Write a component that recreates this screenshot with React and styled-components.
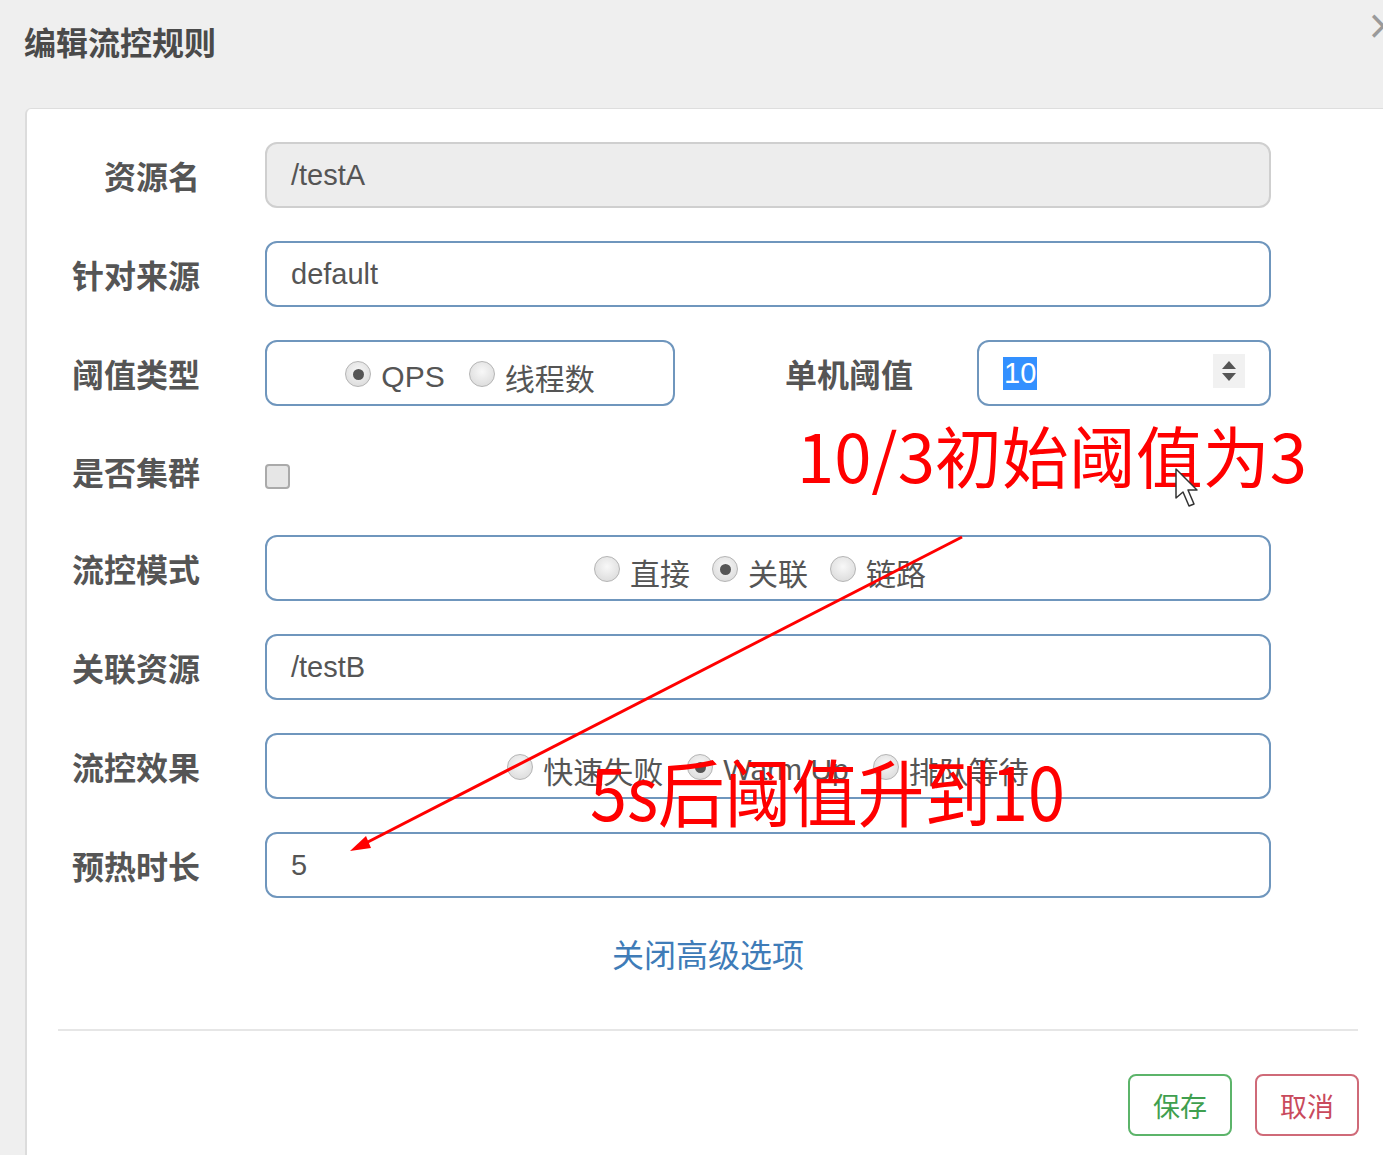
import React from 'react'
import styled, { createGlobalStyle } from 'styled-components'

const GlobalStyle = createGlobalStyle`
  body {
    margin: 0;
    background: #efefef;
    font-family: "Liberation Sans", "Noto Sans CJK SC", sans-serif;
  }
`

const Page = styled.div`
  position: relative;
  width: 1383px;
  height: 1155px;
  overflow: hidden;
`

const Header = styled.div`
  height: 108px;
  display: flex;
  justify-content: space-between;
  align-items: flex-start;
  box-sizing: border-box;
  padding: 20px 0 0 24px;
`

const Title = styled.h4`
  margin: 0;
  font-family: "Noto Sans CJK SC", sans-serif;
  font-size: 32px;
  font-weight: 700;
  color: #4a4a4a;
  line-height: 42px;
`

const Close = styled.span`
  margin: -18px -17px 0 0;
  font-size: 40px;
  color: #9a9a9a;
  font-family: "DejaVu Sans", sans-serif;
`

const Card = styled.div`
  margin-left: 25px;
  min-height: 1100px;
  background: #fff;
  border-left: 2px solid #dcdcdc;
  border-top: 1px solid #dedede;
  border-top-left-radius: 6px;
`

const Form = styled.div`
  display: flex;
  flex-direction: column;
  gap: 33px;
  padding: 33px 112px 0 0;
`

const Row = styled.div`
  display: grid;
  grid-template-columns: 172px 1fr;
  column-gap: 66px;
  align-items: center;
  height: ${p => p.$h || 66}px;
`

const Label = styled.label`
  text-align: right;
  font-family: "Noto Sans CJK SC", sans-serif;
  font-size: 32px;
  font-weight: 700;
  color: #555;
  white-space: nowrap;
  margin-right: -1px;
`

const Box = styled.div`
  box-sizing: border-box;
  height: 66px;
  width: ${p => p.$w || '100%'};
  border: 2px solid ${p => (p.$disabled ? '#cfcfcf' : '#6f96bd')};
  border-radius: 12px;
  background: ${p => (p.$disabled ? '#ededed' : '#fff')};
  display: flex;
  align-items: center;
  justify-content: ${p => (p.$center ? 'center' : 'flex-start')};
  padding: ${p => (p.$center ? '8px 24px 0' : '0 24px')};
  padding-right: ${p => p.$pr || 24}px;
  font-size: 29px;
  color: #555;
  gap: ${p => p.$gap || 24}px;
`

const Split = styled.div`
  display: flex;
  align-items: center;
`

const SubLabel = styled(Label)`
  flex: 1;
  margin-right: 64px;
`

const RadioItem = styled.span`
  display: inline-flex;
  align-items: center;
  gap: 10px;
  font-family: "Liberation Sans", "Noto Sans CJK SC", sans-serif;
  font-size: 30px;
  color: #555;
`

const RadioDot = styled.span`
  box-sizing: border-box;
  width: 26px;
  height: 26px;
  border-radius: 50%;
  border: 1px solid #b4b4b4;
  background: radial-gradient(circle at 50% 40%, #f8f8f8, #d6d6d6);
  display: inline-flex;
  align-items: center;
  justify-content: center;
  margin-top: -6px;
  &::after {
    content: '';
    width: 11px;
    height: 11px;
    border-radius: 50%;
    background: ${p => (p.$on ? '#555' : 'transparent')};
  }
`

const Check = styled.span`
  box-sizing: border-box;
  width: 25px;
  height: 25px;
  margin-top: 12px;
  border: 2px solid #aaa;
  border-radius: 4px;
  background: #e6e6e6;
`

const Selected = styled.span`
  background: #3390ff;
  color: #fff;
  padding: 0 1px;
`

const Spinner = styled.span`
  margin-left: auto;
  width: 32px;
  height: 34px;
  margin-top: -4px;
  background: #f1f1f1;
  display: flex;
  flex-direction: column;
  align-items: center;
  justify-content: center;
  gap: 4px;
`

const Tri = styled.span`
  width: 0;
  height: 0;
  border-left: 7px solid transparent;
  border-right: 7px solid transparent;
  ${p => (p.$down ? 'border-top: 8px solid #555;' : 'border-bottom: 8px solid #555;')}
`

const Toggle = styled.div`
  text-align: center;
  margin-top: 34px;
  padding-left: 6px;
  font-family: "Noto Sans CJK SC", sans-serif;
  font-size: 32px;
  color: #3f7cb8;
  line-height: 42px;
`

const Divider = styled.hr`
  border: none;
  border-top: 2px solid #e6e6e6;
  margin: 55px 25px 0 31px;
`

const Footer = styled.div`
  display: flex;
  justify-content: flex-end;
  gap: 23px;
  padding: 43px 24px 0 0;
`

const Btn = styled.button`
  width: 104px;
  height: 62px;
  background: #fff;
  border: 2px solid ${p => p.$c};
  color: ${p => p.$t};
  border-radius: 8px;
  font-family: "Noto Sans CJK SC", sans-serif;
  font-size: 27px;
`

const Note = styled.div`
  position: absolute;
  left: ${p => p.$x}px;
  top: ${p => p.$y}px;
  font-family: "Noto Sans CJK SC", sans-serif;
  font-size: ${p => p.$s}px;
  line-height: 1;
  color: #ff0000;
  white-space: nowrap;
  transform-origin: left top;
  transform: scaleX(${p => p.$sx || 1});
`

const Overlay = styled.svg`
  position: absolute;
  left: 0;
  top: 0;
  pointer-events: none;
`

const Radio = ({ on, children }) => (
  <RadioItem>
    <RadioDot $on={on} />
    {children}
  </RadioItem>
)

export default function App() {
  return (
    <Page>
      <GlobalStyle />
      <Header>
        <Title>编辑流控规则</Title>
        <Close>×</Close>
      </Header>
      <Card>
        <Form>
          <Row>
            <Label>资源名</Label>
            <Box $disabled>/testA</Box>
          </Row>
          <Row>
            <Label>针对来源</Label>
            <Box>default</Box>
          </Row>
          <Row>
            <Label>阈值类型</Label>
            <Split>
              <Box $w="410px" $center>
                <Radio on>QPS</Radio>
                <Radio>线程数</Radio>
              </Box>
              <SubLabel>单机阈值</SubLabel>
              <Box $w="294px">
                <Selected>10</Selected>
                <Spinner>
                  <Tri />
                  <Tri $down />
                </Spinner>
              </Box>
            </Split>
          </Row>
          <Row $h={63}>
            <Label>是否集群</Label>
            <Check />
          </Row>
          <Row>
            <Label>流控模式</Label>
            <Box $center $gap={22} $pr={40}>
              <Radio>直接</Radio>
              <Radio on>关联</Radio>
              <Radio>链路</Radio>
            </Box>
          </Row>
          <Row>
            <Label>关联资源</Label>
            <Box>/testB</Box>
          </Row>
          <Row>
            <Label>流控效果</Label>
            <Box $center>
              <Radio>快速失败</Radio>
              <Radio on>Warm Up</Radio>
              <Radio>排队等待</Radio>
            </Box>
          </Row>
          <Row>
            <Label>预热时长</Label>
            <Box>5</Box>
          </Row>
        </Form>
        <Toggle>关闭高级选项</Toggle>
        <Divider />
        <Footer>
          <Btn $c="#5cb46a" $t="#3f9f4f">保存</Btn>
          <Btn $c="#cf6a78" $t="#c94a5c">取消</Btn>
        </Footer>
      </Card>

      <Note $x={797} $y={420} $s={67} $sx={1}>10/3初始阈值为3</Note>
      <Note $x={590} $y={753} $s={73} $sx={0.912}>5s后阈值升到10</Note>

      <Overlay width="1383" height="1155" viewBox="0 0 1383 1155">
        <line x1="962" y1="537" x2="362" y2="845" stroke="#ff0000" strokeWidth="3" />
        <polygon points="350,851 366,836 371,848" fill="#ff0000" />
        <path
          d="M1176 469 L1176 498 L1183 492 L1189 506 L1194 504 L1188 490 L1197 490 Z"
          fill="#fff"
          stroke="#333"
          strokeWidth="1.5"
          strokeLinejoin="round"
        />
      </Overlay>
    </Page>
  )
}
